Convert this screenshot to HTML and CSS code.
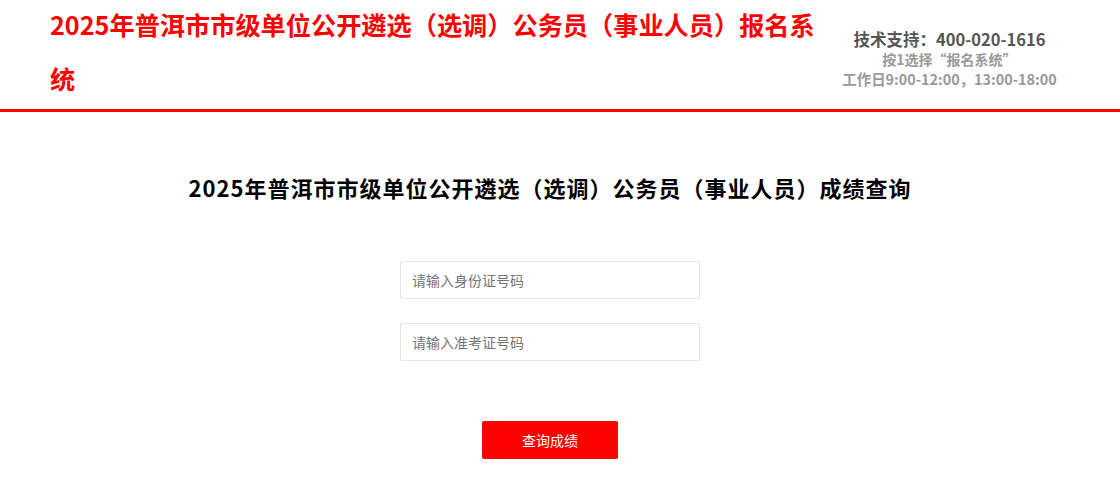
FILE: index.html
```html
<!DOCTYPE html>
<html lang="zh-CN">
<head>
<meta charset="utf-8">
<title>成绩查询</title>
<link rel="stylesheet" href="styles.css">
</head>
<body>
<header class="header">
  <h1 class="site-title">2025年普洱市市级单位公开遴选（选调）公务员（事业人员）报名系统</h1>
  <div class="support">
    <div class="support-phone">技术支持：400-020-1616</div>
    <div class="support-tip">按1选择“报名系统”</div>
    <div class="support-time">工作日9:00-12:00，13:00-18:00</div>
  </div>
</header>
<main class="main">
  <h2 class="page-title">2025年普洱市市级单位公开遴选（选调）公务员（事业人员）成绩查询</h2>
  <form class="query-form">
    <input class="field" type="text" placeholder="请输入身份证号码">
    <input class="field" type="text" placeholder="请输入准考证号码">
    <button class="btn" type="button">查询成绩</button>
  </form>
</main>
</body>
</html>
```
FILE: styles.css
```css
* { box-sizing: border-box; }
html, body { margin: 0; padding: 0; background: #fff; }
body {
  font-family: "Noto Sans CJK SC", "Noto Sans", sans-serif;
  color: #333;
}
.header {
  height: 112px;
  border-bottom: 3px solid #f00;
  display: flex;
  padding: 0 0 0 50px;
}
.site-title {
  flex: 0 0 770px;
  margin: 0;
  margin-top: -3px;
  font-size: 25.2px;
  line-height: 54px;
  font-weight: bold;
  color: #f00;
}
.support {
  flex: 1;
  min-width: 0;
  padding-top: 29px;
  padding-right: 41px;
  text-align: center;
  font-weight: bold;
  line-height: 20px;
  white-space: nowrap;
}
.support-phone { font-size: 16.5px; color: #555; }
.support-tip { font-size: 14px; color: #999; }
.support-time { font-size: 14.4px; color: #999; }
.main {
  width: 1100px;
  display: flex;
  flex-direction: column;
  align-items: center;
}
.page-title {
  margin: 60px 0 0;
  font-size: 22px;
  line-height: 30px;
  font-weight: bold;
  color: #000;
  letter-spacing: 1px;
}
.query-form {
  margin-top: 59px;
  display: flex;
  flex-direction: column;
  align-items: center;
}
.field {
  width: 300px;
  height: 38px;
  border: 1px solid #e6e6e6;
  border-radius: 2px;
  padding: 0 11px;
  font-family: inherit;
  font-size: 14px;
  color: #333;
  margin-bottom: 24px;
  outline: none;
}
.field::placeholder { color: #757575; }
.btn {
  margin-top: 36px;
  width: 136px;
  height: 38px;
  border: none;
  border-radius: 2px;
  background: #f00;
  color: #fff;
  font-family: inherit;
  font-size: 14px;
}
```
